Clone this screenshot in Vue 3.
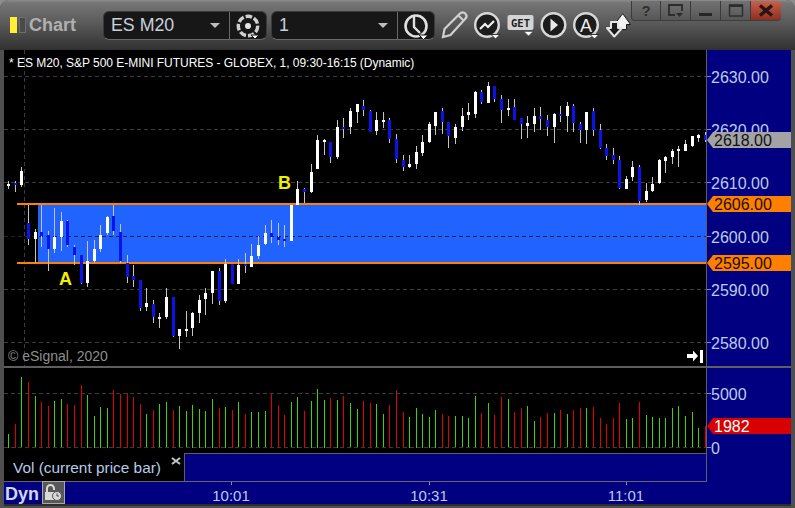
<script setup>
// [wickTop, wickBottom, bodyTop, bodyBottom, blue?] in 3x zoom units, grouped by vertical origin
const groupA = [
  [63,87,71,77,0],[63,96,69,75,1],[22,83,33,75,0],[135,255,189,237,1],[207,309,216,237,0],[135,261,216,228,1],
  [213,333,225,267,1],[144,279,231,267,0],[156,273,183,231,0],[180,261,183,255,1],[255,315,261,285,1],[285,372,285,369,1],
  [243,381,303,369,0],[240,309,267,303,0],[195,276,225,267,0],[168,225,171,219,0],[135,225,168,213,1],[192,309,216,303,1],
  [285,369,309,351,1],[315,381,348,360,1],[360,453,360,444,1],[384,453,429,441,0],[420,489,432,471,1],[459,504,471,477,0],
  [384,477,411,471,0],[411,531,411,528,1],[507,567,507,528,0],[453,531,507,513,0],[456,528,459,504,0],[405,489,420,459,0],
  [384,465,399,417,0],[333,432,333,399,0],[324,435,333,423,1],[297,429,312,423,0],[312,372,312,372,1],[297,372,315,372,0],
  [279,339,312,318,1],[252,321,288,321,0],[228,297,255,288,0],[195,255,219,252,0],[180,249,219,231,1],[189,255,231,240,1],
  [195,261,237,243,1],[135,243,135,243,0],[63,135,87,135,0]
]
const groupB = [
  [355,400,357,366,1],[282,369,306,366,0],[195,297,210,297,0],[207,255,210,216,0],[216,279,216,261,1],[150,267,171,261,0],
  [144,204,171,177,1],[114,192,123,171,0],[102,159,102,126,0],[90,138,108,120,1],[120,186,123,186,1],[126,195,150,183,0],
  [126,174,150,156,0],[144,219,150,207,1],[192,279,207,267,1],[255,303,270,291,1],[255,294,282,291,0],[228,297,246,282,0],
  [195,258,216,249,0],[156,219,162,216,0],[126,195,126,168,0],[114,192,123,156,1],[156,234,156,198,1],[162,222,171,204,0],
  [114,183,138,171,0],[99,150,126,135,0],[63,144,66,132,0],[60,102,66,96,1],[36,99,48,99,0],[48,96,48,87,1],
  [75,159,87,120,1],[87,138,114,120,0],[87,150,111,150,1],[144,207,144,162,1],[138,204,159,168,0],[114,186,138,162,0],
  [111,180,138,147,1],[135,198,150,171,1],[129,219,132,171,0],[108,156,132,138,1],[96,186,108,138,0],[102,186,108,159,1],
  [156,219,162,180,1],[126,222,126,180,0],[114,198,123,180,1],[162,237,180,234,1],[222,270,234,258,1],[234,282,255,270,1],
  [258,357,270,354,1],[318,357,327,357,0],[273,333,291,321,0],[285,405,291,393,1],[339,396,363,390,0],[321,366,342,363,0],
  [267,342,270,339,0],[258,309,261,273,0],[237,282,243,261,0],[228,291,237,243,0],[210,243,222,243,0],[198,231,198,228,0],
  [192,216,195,204,0],[186,216,195,210,1]
]
const barX = (i) => Math.round(8.3 + i * 6.57)
const conv = (c, base, i) => ({
  id: i,
  x: barX(i),
  wickY: Math.round(base + c[0] / 3),
  wickH: Math.max(1, Math.round((c[1] - c[0]) / 3)),
  bodyY: Math.round(base + c[2] / 3),
  bodyH: Math.max(2, Math.round((c[3] - c[2]) / 3)),
  blue: !!c[4]
})
const candles = [
  ...groupA.map((c, i) => conv(c, 160, i)),
  ...groupB.map((c, i) => conv(c, 70, i + groupA.length))
]

// volume bars: [top in zoom units, green?]
const volA = [[222,1],[192,0],[51,1],[66,0],[108,1],[126,0],[138,0],[123,1],[117,1],[132,0],[135,0],[75,0],[105,1],[168,1],[141,1],[144,1],[90,0],[102,0],[99,0],[111,0],[132,0],[162,1],[150,0],[132,1],[126,1],[150,0],[138,1],[153,1],[135,1],[147,1],[153,1],[117,1],[144,0],[141,1],[150,0],[126,1],[162,0],[156,1],[156,1],[153,1],
  [102,0],[135,0],[165,0],[126,1],[111,1],[153,0],[123,1],[87,1],[120,1],[114,0],[120,1],[108,0],[129,1],[147,1],[123,0],[129,0],[132,1],[162,1],[135,0],[90,0],[156,0],[171,1],[144,1],[162,1],[171,1],[150,1],[162,0],[168,0],[168,1],[168,1],[174,1],[108,1],[159,0],[129,1],[165,0],[111,0],[117,1],[156,0],[144,0],[138,1]]
const volB = [[273,1],[261,0],[249,0],[249,1],[240,0],[252,1],[240,0],[234,0],[234,1],[231,0],[264,0],[282,0],[264,0],[219,0],[267,1],[264,1],[216,0],[255,1],[261,1],[264,1],[264,1],[234,1],[228,1],[258,1],[246,1],[294,1],[288,0]]
const volume = [
  ...volA.map((v, i) => ({ x: barX(i), y: Math.round(360 + v[0] / 3), green: !!v[1] })),
  ...volB.map((v, i) => ({ x: barX(i + volA.length), y: Math.round(330 + v[0] / 3), green: !!v[1] }))
]

const priceGrid = [76, 129, 182, 289, 342]
const priceLabels = [
  { text: '2630.00', y: 76 }, { text: '2620.00', y: 129 }, { text: '2610.00', y: 182 },
  { text: '2600.00', y: 236 }, { text: '2590.00', y: 289 }, { text: '2580.00', y: 342 }
]
const priceTags = [
  { text: '2618.00', y: 140, kind: 'grey' },
  { text: '2606.00', y: 204, kind: 'orange' },
  { text: '2595.00', y: 263, kind: 'orange' }
]
const times = [{ text: '10:01', x: 227 }, { text: '10:31', x: 425 }, { text: '11:01', x: 622 }]
const winButtons = ['help', 'restore', 'min', 'max', 'close']
</script>

<template>
  <div class="window">
    <header class="toolbar">
      <span class="ind ind-on"></span>
      <span class="ind ind-off"></span>
      <span class="brand">Chart</span>

      <div class="combo combo-a">
        <div class="combo-field">
          <span class="combo-text">ES M20</span>
          <span class="caret"></span>
        </div>
        <button class="combo-btn">
          <svg width="36" height="29" viewBox="0 0 36 29">
            <circle cx="18" cy="14" r="9.7" fill="none" stroke="#cfcfcf" stroke-width="3.4" stroke-dasharray="6.600 2"/>
            <circle cx="18" cy="14" r="3" fill="#e4e4e4"/>
            <path d="M21 23h8l-4 4z" fill="#fff" stroke="#161616"/>
          </svg>
        </button>
      </div>

      <div class="combo combo-b">
        <div class="combo-field">
          <span class="combo-text">1</span>
          <span class="caret"></span>
        </div>
        <button class="combo-btn">
          <svg width="36" height="29" viewBox="0 0 36 29">
            <circle cx="18" cy="14" r="10.5" fill="none" stroke="#e0e0e0" stroke-width="2.6"/>
            <path d="M16 5v10l6 6" fill="none" stroke="#e0e0e0" stroke-width="2.4"/>
            <path d="M21 23h9l-4.500 4.500z" fill="#fff" stroke="#161616"/>
          </svg>
        </button>
      </div>

      <div class="tools">
        <svg width="32" height="36" viewBox="0 0 32 36">
          <path d="M4 30l1.500-8L21 6.500c1.600-1.600 3.800-1.600 5.300 0s1.600 3.700 0 5.300L11.500 28z" fill="none" stroke="#d0d0d0" stroke-width="2.200"/>
          <path d="M19.500 8.500l5.500 5.500" stroke="#d0d0d0" stroke-width="2"/>
        </svg>
        <svg width="33" height="36" viewBox="0 0 33 36">
          <circle cx="16" cy="18" r="11.800" fill="#1c1c1c" stroke="#d8d8d8" stroke-width="2.400"/>
          <path d="M9 22l5-5 3 3 6-6" fill="none" stroke="#f0f0f0" stroke-width="2.200"/>
          <path d="M20 27.500h9l-4.500 4.500z" fill="#fff" stroke="#333"/>
        </svg>
        <svg width="33" height="36" viewBox="0 0 33 36">
          <rect x="3.500" y="8" width="26" height="15" rx="2" fill="#d4d4d4"/>
          <text x="16.500" y="19.500" class="get-text" text-anchor="middle">GET</text>
          <path d="M20 24.500h9l-4.500 4.500z" fill="#fff" stroke="#444" stroke-width=".6"/>
        </svg>
        <svg width="33" height="36" viewBox="0 0 33 36">
          <circle cx="16.500" cy="18" r="11.800" fill="#1c1c1c" stroke="#d8d8d8" stroke-width="2.400"/>
          <path d="M13.500 11.500l7.500 6.500-7.500 6.500z" fill="#e8e8e8"/>
        </svg>
        <svg width="32" height="36" viewBox="0 0 32 36">
          <circle cx="16" cy="18" r="11.800" fill="#1c1c1c" stroke="#d8d8d8" stroke-width="2.400"/>
          <text x="16" y="24.500" class="a-text" text-anchor="middle">A</text>
          <path d="M20 27.500h9l-4.500 4.500z" fill="#fff" stroke="#333"/>
        </svg>
        <svg width="29" height="36" viewBox="0 0 29 36">
          <path d="M20.700 6.500L28.500 17.500h-4v5h-8v-5h-4z" fill="#f2f2f2" stroke="#1c1c1c" stroke-width="1"/>
          <path d="M12.300 29.500L5 21h4v-6h7v6h4z" fill="#1a1a1a" stroke="#e4e4e4" stroke-width="2" stroke-linejoin="round"/>
        </svg>
      </div>

      <div class="win-buttons">
        <div v-for="b in winButtons" :key="b" class="win-btn" :class="{ 'win-close': b === 'close' }">
          <span v-if="b === 'help'" class="help-mark">?</span>
          <svg v-else-if="b === 'restore'" width="20" height="16" viewBox="0 0 20 16">
            <path d="M9 12H3V2h13v6" fill="none" stroke="#2c2c2c" stroke-width="1.800"/>
            <path d="M10 10h7l-3.500 4z" fill="#2c2c2c"/>
          </svg>
          <svg v-else-if="b === 'min'" width="20" height="16" viewBox="0 0 20 16">
            <rect x="3" y="10" width="13" height="3" fill="#262626"/>
          </svg>
          <svg v-else-if="b === 'max'" width="20" height="16" viewBox="0 0 20 16">
            <rect x="3.500" y="2" width="13" height="11" fill="none" stroke="#2c2c2c" stroke-width="1.400"/>
            <rect x="3" y="1.500" width="14" height="2.500" fill="#2c2c2c"/>
          </svg>
          <svg v-else width="20" height="16" viewBox="0 0 20 16">
            <path d="M4 2.500l12 10M16 2.500l-12 10" stroke="#2a1510" stroke-width="3.400"/>
          </svg>
        </div>
      </div>
    </header>

    <main class="panes">
      <section class="plot plot-price">
        <svg class="canvas" width="702" height="316" viewBox="4 50 702 316" shape-rendering="crispEdges">
          <rect x="38" y="205" width="668" height="57" fill="#2163ff"/>
          <line v-for="y in priceGrid" :key="y" x1="4" x2="706" :y1="y + .5" :y2="y + .5" class="grid"/>
          <line x1="4" x2="706" y1="236.500" y2="236.500" class="grid grid-band"/>
          <line x1="24.500" x2="24.500" y1="50" y2="366" class="grid"/>
          <rect x="17" y="203" width="689" height="2" fill="#ff7f00"/>
          <rect x="17" y="262" width="689" height="2" fill="#ff7f00"/>
          <g v-for="c in candles" :key="c.id">
            <rect :x="c.x" :y="c.wickY" width="1" :height="c.wickH" fill="#c4c4c4"/>
            <rect :x="c.x - 1" :y="c.bodyY" width="3" :height="c.bodyH" :fill="c.blue ? '#0a14e6' : '#ffffff'"/>
          </g>
          <g shape-rendering="auto">
            <path d="M687 354h6v-3.500l5 5.500-5 5.500V358h-6z" fill="#fff"/>
            <rect x="700" y="350" width="3" height="13" fill="#fff"/>
          </g>
        </svg>
        <div class="title">* ES M20, S&amp;P 500 E-MINI FUTURES - GLOBEX, 1, 09:30-16:15 (Dynamic)</div>
        <span class="marker marker-a">A</span>
        <span class="marker marker-b">B</span>
        <span class="copyright">© eSignal, 2020</span>
      </section>
      <aside class="axis axis-price">
        <div v-for="l in priceLabels" :key="l.text" class="tick-label" :style="{ top: (l.y - 50) + 'px' }">
          <i class="tick"></i><span>{{ l.text }}</span>
        </div>
        <div v-for="t in priceTags" :key="t.text" class="tag" :class="'tag-' + t.kind" :style="{ top: (t.y - 50 - 8) + 'px' }">{{ t.text }}</div>
      </aside>

      <div class="divider"></div>

      <section class="plot plot-vol">
        <svg class="canvas" width="702" height="85" viewBox="4 368 702 85" shape-rendering="crispEdges">
          <line x1="4" x2="706" y1="393.500" y2="393.500" class="grid"/>
          <rect v-for="(v, i) in volume" :key="i" :x="v.x" :y="v.y" width="1" :height="448 - v.y" :fill="v.green ? '#3fd400' : '#e00000'"/>
          <line x1="4" x2="706" y1="447.500" y2="447.500" class="grid"/>
        </svg>
      </section>
      <aside class="axis axis-vol">
        <div class="tick-label" style="top: 25px"><i class="tick"></i><span>5000</span></div>
        <div class="tick-label" style="top: 79px"><i class="tick"></i><span>0</span></div>
        <div class="tag tag-red" style="top: 50px">1982</div>
      </aside>

      <section class="legend">
        <div class="legend-left">
          <span class="legend-text">Vol (current price bar)</span>
          <svg class="legend-x" width="10" height="8" viewBox="0 0 10 8">
            <path d="M1 1l8 6M9 1l-8 6" stroke="#c8c8c8" stroke-width="2"/>
          </svg>
        </div>
        <div class="legend-right"></div>
      </section>
      <aside class="axis axis-legend"></aside>

      <footer class="timebar">
        <span class="dyn">Dyn</span>
        <div class="lock">
          <svg width="21" height="21" viewBox="0 0 21 21">
            <path d="M4 10V6.500a3.500 3.500 0 0 1 7 0V8" fill="none" stroke="#d8d8d8" stroke-width="2"/>
            <rect x="2" y="10" width="10" height="8" fill="#d8d8d8"/>
            <circle cx="14" cy="14" r="4.500" fill="#d8d8d8" stroke="#555" stroke-width="1"/>
            <path d="M14 11.500V14h2" fill="none" stroke="#444" stroke-width="1"/>
          </svg>
        </div>
        <div v-for="t in times" :key="t.text" class="time" :style="{ left: t.x + 'px' }">
          <i class="time-tick"></i>
          <span>{{ t.text }}</span>
        </div>
      </footer>
    </main>
  </div>
</template>

<style>
html, body { margin: 0; background: #8c8c8c; }
</style>

<style scoped>
.window {
  width: 795px;
  height: 508px;
  box-sizing: border-box;
  display: flex;
  flex-direction: column;
  background: #4f4f4f;
  border-radius: 9px 9px 0 0;
  overflow: hidden;
  font-family: "Liberation Sans", Arial, sans-serif;
}
.toolbar {
  height: 50px;
  flex: none;
  display: flex;
  align-items: center;
  padding-left: 10px;
  background: linear-gradient(#8c8c8c 0, #757575 3px, #5e5e5e 20px, #343434 48px, #303030 50px);
}
.ind { width: 7px; height: 16px; flex: none; }
.ind-on { background: #ffee33; }
.ind-off { width: 5px; height: 14px; margin-left: 2px; border: 1px solid #6e6e6e; background: #4a4a4a; }
.brand { margin-left: 3px; width: 74px; font-size: 18px; font-weight: 700; color: #b0b0b0; }
.combo {
  height: 29px;
  box-sizing: border-box;
  display: flex;
  background: #171717;
  border: 1px solid #3a3a3a;
  border-bottom-color: #6a6a6a;
  border-radius: 6px;
}
.combo-a { width: 164px; }
.combo-b { width: 164px; margin-left: 4px; }
.combo-field {
  flex: 1;
  display: flex;
  align-items: center;
  justify-content: space-between;
  padding: 0 9px 0 7px;
  border-right: 1px solid #6a6a6a;
}
.combo-text { font-size: 17.800px; color: #c8d0dc; }
.caret {
  width: 0;
  height: 0;
  border-left: 5px solid transparent;
  border-right: 5px solid transparent;
  border-top: 5px solid #bdbdbd;
}
.combo-btn {
  width: 36px;
  flex: none;
  padding: 0;
  margin: 0;
  border: 0;
  background: none;
  display: flex;
}
.tools { margin-left: 4px; display: flex; align-items: center; }
.tools svg { flex: none; display: block; }
.get-text { font-family: "DejaVu Sans Mono", monospace; font-weight: 700; font-size: 10.500px; fill: #1c1c1c; }
.a-text { font-family: "Liberation Sans", sans-serif; font-size: 18px; fill: #f0f0f0; }
.win-buttons {
  align-self: flex-start;
  margin-top: 1px;
  display: flex;
  flex: none;
}
.win-btn {
  width: 30px;
  height: 20px;
  box-sizing: border-box;
  display: flex;
  align-items: center;
  justify-content: center;
  background: linear-gradient(#727272, #565656);
  border-right: 1px solid #3a3a3a;
  border-bottom: 1px solid #3e3e3e;
}
.win-btn:first-child { border-left: 1px solid #3a3a3a; border-radius: 0 0 0 4px; }
.win-close { background: linear-gradient(#c8604c, #8e2f22); border-radius: 0 4px 4px 0; border-right: 0; }
.help-mark { font-size: 15px; font-weight: 700; color: #2e2e2e; }
.panes {
  flex: none;
  margin: 0 4px;
  display: grid;
  grid-template-columns: 702px 85px;
  grid-template-rows: 316px 2px 85px 29px 24px;
}
.plot { position: relative; background: #000; overflow: hidden; }
.canvas { display: block; }
.grid { stroke: #3c3c3c; stroke-width: 1; stroke-dasharray: 4 3; }
.grid-band { stroke: #1e1e2a; }
.title {
  position: absolute;
  left: 5px;
  top: 6px;
  font-size: 12px;
  letter-spacing: -.03px;
  line-height: 14px;
  color: #fff;
  white-space: nowrap;
}
.marker {
  position: absolute;
  font-size: 18px;
  font-weight: 700;
  line-height: 18px;
  color: #eef000;
}
.marker-a { left: 55px; top: 220px; }
.marker-b { left: 274px; top: 124px; }
.copyright {
  position: absolute;
  left: 4px;
  top: 298px;
  font-size: 14px;
  line-height: 16px;
  color: #8e8e8e;
  white-space: nowrap;
}
.axis {
  position: relative;
  background: #000080;
  border-left: 1px solid #5e5e5e;
  overflow: hidden;
  font-size: 16px;
  color: #bccbea;
}
.axis-vol { overflow: visible; z-index: 1; background: #000080; }
.tick-label {
  position: absolute;
  left: 0;
  height: 18px;
  margin-top: -9px;
  display: flex;
  align-items: center;
  line-height: 18px;
  white-space: nowrap;
}
.tick-label span { position: relative; top: 1.500px; }
.tick { width: 4px; height: 1px; background: #8a8aa0; }
.tag {
  position: absolute;
  left: 0;
  width: 84px;
  height: 16px;
  box-sizing: border-box;
  padding-left: 7px;
  line-height: 18px;
  clip-path: polygon(0 50%, 6px 0, 100% 0, 100% 100%, 6px 100%);
}
.tag-grey { background: #a3a3a6; color: #111; }
.tag-orange { background: #ff7f00; color: #1a1208; }
.tag-red { background: #d80000; color: #fff; }
.divider { grid-column: 1 / 3; background: #5e5e5e; }
.legend { display: flex; height: 29px; box-sizing: border-box; border-bottom: 1px solid #666; }
.legend-left {
  width: 180px;
  flex: none;
  position: relative;
  background: #000;
  padding: 2px 0 0 9px;
  box-sizing: border-box;
  display: flex;
  align-items: center;
}
.legend-text { font-size: 15.400px; color: #b6cbea; white-space: nowrap; }
.legend-x { position: absolute; right: 3px; top: 4px; }
.legend-right {
  flex: 1;
  background: #000080;
  border-top: 1px solid #5e5e5e;
  border-left: 1px solid #5e5e5e;
}
.timebar {
  grid-column: 1 / 3;
  position: relative;
  height: 24px;
  box-sizing: border-box;
  display: flex;
  align-items: flex-start;
  padding-left: 1px;
  background: #000080;
  border-bottom: 2px solid #2c2c2c;
}
.dyn { font-size: 18px; font-weight: 700; line-height: 24px; color: #d2d6ea; }
.lock {
  width: 23px;
  height: 23px;
  margin: -1px 0 0 3px;
  box-sizing: border-box;
  border: 1px solid #a8a8a8;
  background: #585858;
  display: flex;
  align-items: center;
  justify-content: center;
}
.time {
  position: absolute;
  top: 0;
  width: 0;
  height: 22px;
  display: flex;
  justify-content: center;
  font-size: 15px;
  line-height: 27px;
  color: #bccbea;
}
.time-tick { position: absolute; left: 0; top: 0; width: 1px; height: 3px; background: #8a8aa0; }
</style>
